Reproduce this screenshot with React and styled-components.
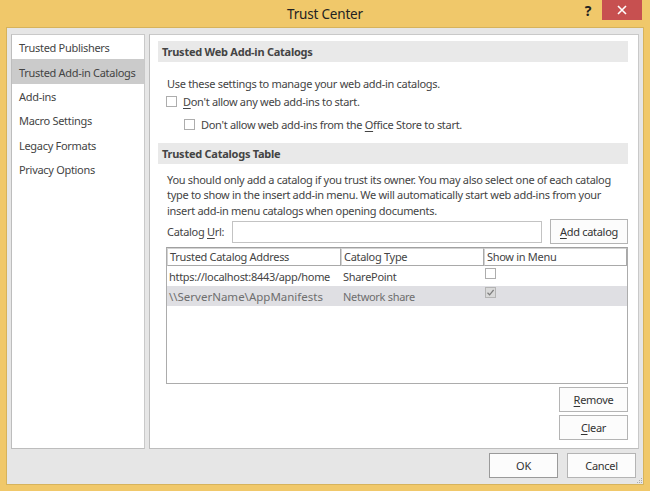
import React from 'react';
import styled, { createGlobalStyle } from 'styled-components';

const GlobalStyle = createGlobalStyle`
  html, body {
    margin: 0;
    padding: 0;
    background: #f0c86a;
  }
  body {
    font-family: 'Noto Sans', 'Open Sans', sans-serif;
  }
`;

const FONT = `'Noto Sans', 'Open Sans', sans-serif`;

const Frame = styled.div`
  width: 650px;
  height: 491px;
  box-sizing: border-box;
  background: #f0c86a;
  padding: 0 6px 6px 6px;
  display: flex;
  flex-direction: column;
  font-family: ${FONT};
  font-size: 11px;
  letter-spacing: -0.3px;
  color: #444;
`;

const TitleBar = styled.div`
  height: 27px;
  display: grid;
  grid-template-columns: 1fr auto 1fr;
  align-items: start;
`;

const Title = styled.div`
  grid-column: 2;
  padding-top: 5px;
  font-size: 13.5px;
  letter-spacing: -0.2px;
  color: #222;
`;

const Controls = styled.div`
  grid-column: 3;
  display: flex;
  justify-content: flex-end;
  align-items: flex-start;
`;

const HelpButton = styled.div`
  width: 22px;
  height: 20px;
  margin-right: 3px;
  display: flex;
  align-items: center;
  justify-content: center;
  font-size: 14px;
  font-weight: bold;
  color: #222;
`;

const CloseButton = styled.div`
  width: 40px;
  height: 20px;
  margin-right: 2px;
  background: #c75050;
  display: flex;
  align-items: center;
  justify-content: center;
`;

const Body = styled.div`
  flex: 1;
  background: #e6e6e6;
  border: 1px solid #d6b35c;
  padding: 6px 4px 6px 4px;
  display: flex;
  flex-direction: column;
  position: relative;
`;

const Main = styled.div`
  flex: 1;
  display: flex;
  gap: 4px;
  min-height: 0;
`;

const Panel = styled.div`
  background: #fff;
  border: 1px solid #c9c9c9;
  border-left-color: #bdbdbd;
  border-bottom-color: #bdbdbd;
  box-sizing: border-box;
`;

const Nav = styled(Panel)`
  width: 134px;
  display: flex;
  flex-direction: column;
`;

const NavItem = styled.div`
  height: 24.4px;
  box-sizing: border-box;
  padding: 1px 0 0 7px;
  display: flex;
  align-items: center;
  color: #444;
  background: ${p => (p.$active ? '#cbcbcb' : 'transparent')};
  white-space: nowrap;
`;

const Content = styled(Panel)`
  width: 490px;
  padding: 6px 10px 0 8px;
  display: flex;
  flex-direction: column;
`;

const SectionHeader = styled.div`
  height: 21px;
  line-height: 21px;
  background: #e9e9e9;
  padding-left: 4px;
  font-weight: bold;
  letter-spacing: -0.25px;
  color: #444;
  margin-top: ${p => p.$top || 0}px;
`;

const Text = styled.div`
  padding-left: 9px;
  line-height: 15.5px;
  margin-top: ${p => p.$top || 0}px;
  white-space: nowrap;
`;

const CheckRow = styled.label`
  display: flex;
  align-items: center;
  gap: 6px;
  height: 18px;
  padding-left: ${p => p.$indent}px;
  margin-top: ${p => p.$top || 0}px;
`;

const Box = styled.span`
  width: 11px;
  height: 11px;
  box-sizing: border-box;
  border: 1px solid ${p => (p.$disabled ? '#b4b4b4' : '#adadad')};
  background: ${p => (p.$disabled ? '#d9d9d9' : '#fff')};
  display: inline-flex;
  align-items: center;
  justify-content: center;
  flex: none;
`;

const U = styled.span`
  text-decoration: underline;
  text-underline-offset: 2px;
`;

const UrlRow = styled.div`
  display: flex;
  align-items: center;
  height: 25px;
  margin-top: 1px;
  padding-left: 9px;
`;

const UrlLabel = styled.span`
  width: 65px;
`;

const UrlInput = styled.div`
  width: 310px;
  height: 22px;
  box-sizing: border-box;
  border: 1px solid #c3c3c3;
  background: #fff;
`;

const Button = styled.div`
  width: ${p => p.$w || 69}px;
  height: 25px;
  box-sizing: border-box;
  border: 1px solid ${p => (p.$default ? '#9a9a9a' : '#b4b4b4')};
  background: #fcfcfc;
  display: flex;
  align-items: center;
  justify-content: center;
  color: #333;
  margin-left: ${p => p.$ml || 0}px;
`;

const Table = styled.div`
  margin-top: 3px;
  margin-left: 8px;
  width: 462px;
  height: 137px;
  box-sizing: border-box;
  border: 1px solid #acacac;
  border-top-color: #a0a0a0;
  background: #fff;
  display: flex;
  flex-direction: column;
`;

const TableRow = styled.div`
  display: grid;
  grid-template-columns: 174px 143px 1fr;
  height: ${p => p.$h}px;
  background: ${p => (p.$shade ? '#dfdfe3' : 'transparent')};
  color: ${p => (p.$muted ? '#6e6e6e' : '#444')};
`;

const HeadCell = styled.div`
  border: 1px solid #d3d3d3;
  border-right-color: #a9a9a9;
  border-bottom-color: #a9a9a9;
  padding-left: 2px;
  line-height: 15px;
  white-space: nowrap;
  overflow: hidden;
`;

const Cell = styled.div`
  padding-left: ${p => p.$pl ?? 2}px;
  padding-top: ${p => p.$pt ?? 0}px;
  display: flex;
  align-items: ${p => (p.$top ? 'flex-start' : 'center')};
  white-space: nowrap;
  overflow: hidden;
  font-size: ${p => p.$fs || 11}px;
  letter-spacing: ${p => (p.$wide ? 0 : -0.3)}px;
`;

const SideButtons = styled.div`
  display: flex;
  flex-direction: column;
  align-items: flex-end;
  gap: 3px;
  margin-top: 3px;
`;

const Footer = styled.div`
  height: 25px;
  margin-top: 4px;
  display: flex;
  justify-content: flex-end;
  gap: 9px;
  padding-right: 3px;
`;

const Grip = styled.svg`
  position: absolute;
  right: 0;
  bottom: 0;
`;

const Check = () => (
  <svg width="9" height="9" viewBox="0 0 9 9">
    <path d="M1.5 4.8 L3.6 6.8 L7.6 2" fill="none" stroke="#7d7d7d" strokeWidth="1.2" />
  </svg>
);

const navItems = [
  'Trusted Publishers',
  'Trusted Add-in Catalogs',
  'Add-ins',
  'Macro Settings',
  'Legacy Formats',
  'Privacy Options',
];

export default function App() {
  return (
    <>
      <GlobalStyle />
      <Frame>
        <TitleBar>
          <Title>Trust Center</Title>
          <Controls>
            <HelpButton>?</HelpButton>
            <CloseButton>
              <svg width="10" height="10" viewBox="0 0 10 10">
                <path d="M1 1 L9 9 M9 1 L1 9" stroke="#fff" strokeWidth="1.6" />
              </svg>
            </CloseButton>
          </Controls>
        </TitleBar>
        <Body>
          <Main>
            <Nav>
              {navItems.map(item => (
                <NavItem key={item} $active={item === 'Trusted Add-in Catalogs'}>
                  {item}
                </NavItem>
              ))}
            </Nav>
            <Content>
              <SectionHeader>Trusted Web Add-in Catalogs</SectionHeader>
              <Text $top={14}>Use these settings to manage your web add-in catalogs.</Text>
              <CheckRow $indent={8} $top={1}>
                <Box />
                <span><U>D</U>on't allow any web add-ins to start.</span>
              </CheckRow>
              <CheckRow $indent={26} $top={5}>
                <Box />
                <span>Don't allow web add-ins from the <U>O</U>ffice Store to start.</span>
              </CheckRow>
              <SectionHeader $top={9}>Trusted Catalogs Table</SectionHeader>
              <Text $top={8}>
                You should only add a catalog if you trust its owner. You may also select one of each catalog
                <br />
                type to show in the insert add-in menu. We will automatically start web add-ins from your
                <br />
                insert add-in menu catalogs when opening documents.
              </Text>
              <UrlRow>
                <UrlLabel>Catalog <U>U</U>rl:</UrlLabel>
                <UrlInput />
                <Button $w={78} $ml={8}><span><U>A</U>dd catalog</span></Button>
              </UrlRow>
              <Table>
                <TableRow $h={18}>
                  <HeadCell>Trusted Catalog Address</HeadCell>
                  <HeadCell>Catalog Type</HeadCell>
                  <HeadCell>Show in Menu</HeadCell>
                </TableRow>
                <TableRow $h={20}>
                  <Cell>https://localhost:8443/app/home</Cell>
                  <Cell>SharePoint</Cell>
                  <Cell $top $pt={2} $pl={1}><Box /></Cell>
                </TableRow>
                <TableRow $h={20} $shade $muted>
                  <Cell $fs={11.5} $wide>\\ServerName\AppManifests</Cell>
                  <Cell>Network share</Cell>
                  <Cell $top $pt={1} $pl={1}><Box $disabled><Check /></Box></Cell>
                </TableRow>
              </Table>
              <SideButtons>
                <Button><span><U>R</U>emove</span></Button>
                <Button><span><U>C</U>lear</span></Button>
              </SideButtons>
            </Content>
          </Main>
          <Footer>
            <Button $default>OK</Button>
            <Button>Cancel</Button>
          </Footer>
          <Grip width="6" height="6" viewBox="0 0 6 6">
            <rect x="4" y="0" width="1" height="1" fill="#aaa" />
            <rect x="2" y="2" width="1" height="1" fill="#aaa" />
            <rect x="4" y="2" width="1" height="1" fill="#aaa" />
            <rect x="0" y="4" width="1" height="1" fill="#aaa" />
            <rect x="2" y="4" width="1" height="1" fill="#aaa" />
            <rect x="4" y="4" width="1" height="1" fill="#aaa" />
          </Grip>
        </Body>
      </Frame>
    </>
  );
}
